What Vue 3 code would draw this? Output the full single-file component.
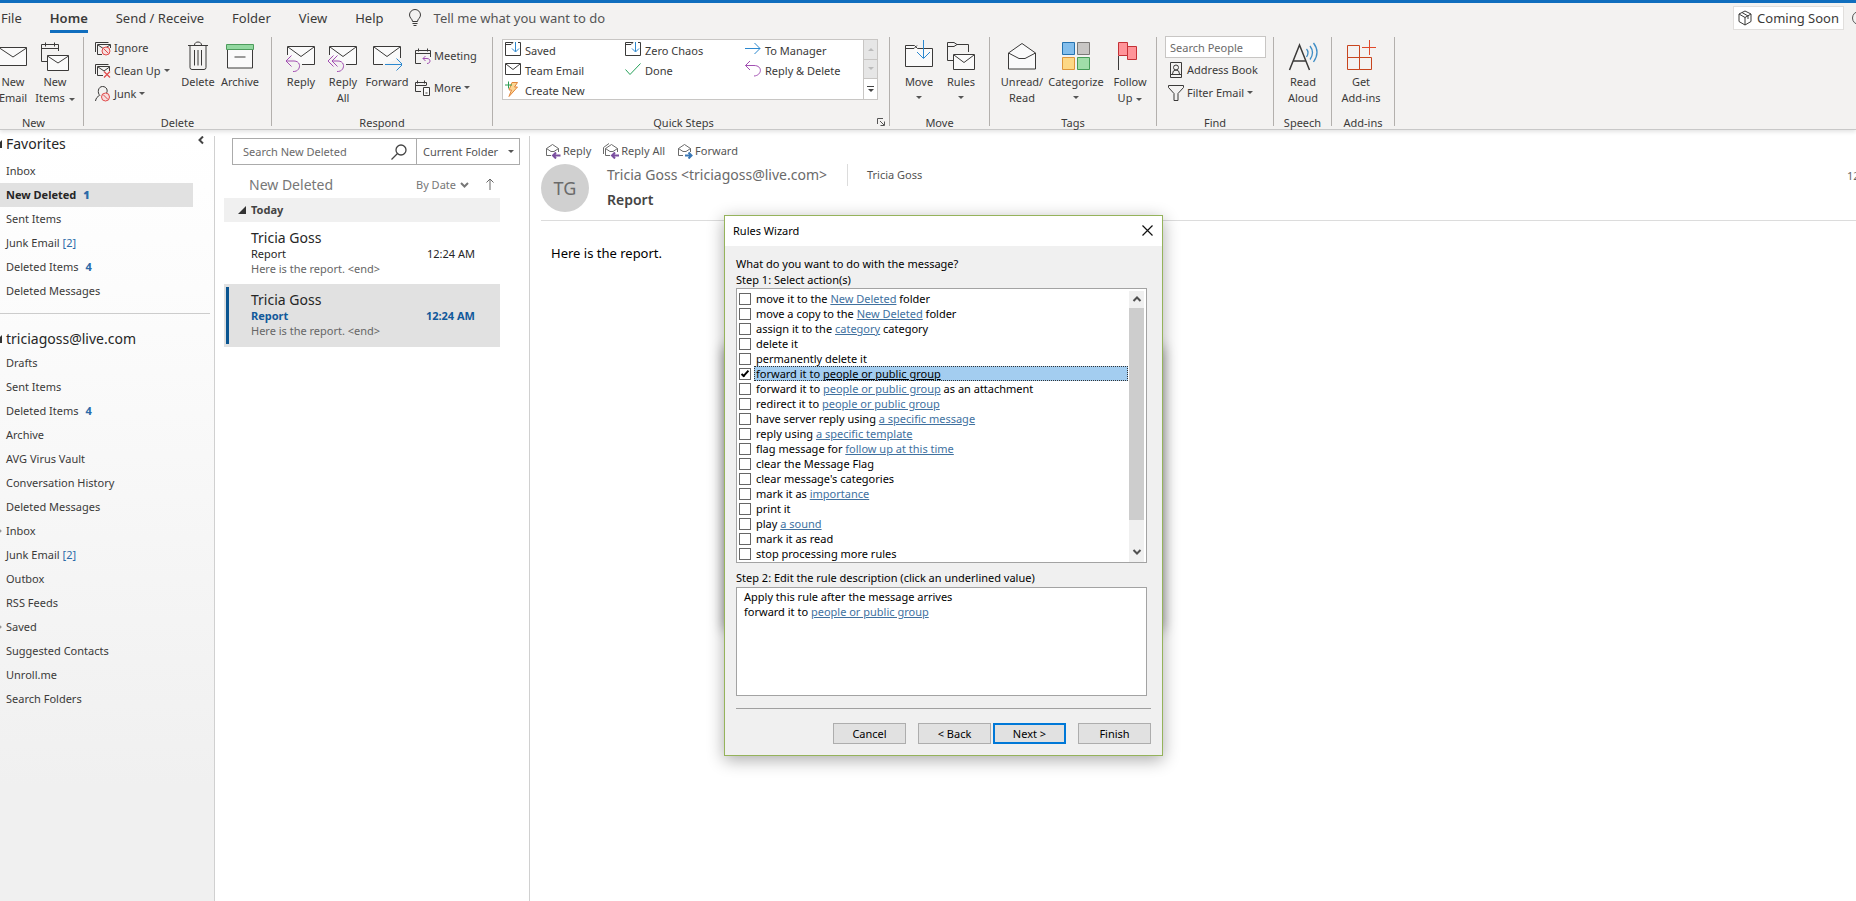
<script setup>
import { ref } from 'vue'

const tabs = ['File', 'Home', 'Send / Receive', 'Folder', 'View', 'Help']

const quickSteps = [
  { icon: 'q-folder', text: 'Saved' },
  { icon: 'q-mail', text: 'Team Email' },
  { icon: 'q-bolt', text: 'Create New' },
  { icon: 'q-folder', text: 'Zero Chaos' },
  { icon: 'q-check', text: 'Done' },
  { icon: 'q-to', text: 'To Manager' },
  { icon: 'q-reply', text: 'Reply & Delete' },
]

const favorites = [
  { name: 'Inbox' },
  { name: 'New Deleted', count: '1', active: true },
  { name: 'Sent Items' },
  { name: 'Junk Email', total: '[2]' },
  { name: 'Deleted Items', count: '4' },
  { name: 'Deleted Messages' },
]

const folders = [
  { name: 'Drafts' },
  { name: 'Sent Items' },
  { name: 'Deleted Items', count: '4' },
  { name: 'Archive' },
  { name: 'AVG Virus Vault' },
  { name: 'Conversation History' },
  { name: 'Deleted Messages' },
  { name: 'Inbox', nested: true },
  { name: 'Junk Email', total: '[2]' },
  { name: 'Outbox' },
  { name: 'RSS Feeds' },
  { name: 'Saved', nested: true },
  { name: 'Suggested Contacts' },
  { name: 'Unroll.me' },
  { name: 'Search Folders' },
]

const messages = [
  { from: 'Tricia Goss', subject: 'Report', time: '12:24 AM', preview: 'Here is the report. <end>' },
  { from: 'Tricia Goss', subject: 'Report', time: '12:24 AM', preview: 'Here is the report. <end>', selected: true },
]

const actions = ref([
  { pre: 'move it to the ', link: 'New Deleted', post: ' folder' },
  { pre: 'move a copy to the ', link: 'New Deleted', post: ' folder' },
  { pre: 'assign it to the ', link: 'category', post: ' category' },
  { pre: 'delete it' },
  { pre: 'permanently delete it' },
  { pre: 'forward it to ', link: 'people or public group', checked: true },
  { pre: 'forward it to ', link: 'people or public group', post: ' as an attachment' },
  { pre: 'redirect it to ', link: 'people or public group' },
  { pre: 'have server reply using ', link: 'a specific message' },
  { pre: 'reply using ', link: 'a specific template' },
  { pre: 'flag message for ', link: 'follow up at this time' },
  { pre: 'clear the Message Flag' },
  { pre: "clear message's categories" },
  { pre: 'mark it as ', link: 'importance' },
  { pre: 'print it' },
  { pre: 'play ', link: 'a sound' },
  { pre: 'mark it as read' },
  { pre: 'stop processing more rules' },
])
const current = ref(5)
</script>

<template>
  <div class="app">
    <svg class="sprite" aria-hidden="true">
      <symbol id="mail" viewBox="0 0 30 32" fill="none" stroke="#3b3a39"><path d="M1.5 7.5h27v18h-27z" fill="#fafafa" /><path d="M1.5 8 15 17 28.500 8" /></symbol>
      <symbol id="new-items" viewBox="0 0 30 32" fill="none" stroke="#3b3a39"><path d="M18.500 11V4.500h-17v17H7M1.500 8.500h17M5.500 2.500v4M14.500 2.500v4" /><path d="M7.500 15.500h21v15h-21z" fill="#fafafa" /><path d="M7.500 16 18 23l10.500-7" /></symbol>
      <symbol id="trash" viewBox="0 0 30 32" fill="none" stroke="#3b3a39"><path d="M5 5.500h20M11.500 5c0-4 7-4 7 0M7 5.500v22q0 2 2 2h12q2 0 2-2v-22M11.500 10v15.500M15 10v15.500M18.500 10v15.500" /></symbol>
      <symbol id="archive" viewBox="0 0 30 32" fill="none" stroke="#3b3a39"><path d="M2.500 9v19h25V9" fill="#fafafa" /><path d="M1.500 4.500h27v5h-27z" fill="#92d8a0" stroke="#4d9c5c" /><path d="M9.500 17h11" /></symbol>
      <symbol id="reply" viewBox="0 0 30 32" fill="none" stroke="#3b3a39"><path d="M1.500 15V6.500h27v18H16" fill="#fafafa" /><path d="M2 7l13 9.500L28 7" /><path d="M5.500 15.500 0 21l5.500 5.500M0 21h8c8 0 7 11-1 10.500" stroke="#a24fb2" /></symbol>
      <symbol id="reply-all" viewBox="0 0 30 32" fill="none" stroke="#3b3a39"><path d="M1.500 15V6.500h27v18H18" fill="#fafafa" /><path d="M2 7l13 9.500L28 7" /><path d="M5.500 15.500 0 21l5.500 5.500M9.500 15.500 4 21l5.500 5.500M4 21h6c8 0 7 11-1 10.500" stroke="#a24fb2" /></symbol>
      <symbol id="forward" viewBox="0 0 30 32" fill="none" stroke="#3b3a39"><path d="M11 24.500H1.500v-18h27V18" fill="#fafafa" /><path d="M2 7l13 9.500L28 7" /><path d="M13 24.500h17M24.500 18.500l6 6-6 6" stroke="#2b88cf" /></symbol>
      <symbol id="move" viewBox="0 0 30 32" fill="none" stroke="#3b3a39"><path d="M1.500 26.500v-21h9l3 3h15v18z" fill="#fafafa" /><path d="M1.500 8.500H10l3-3" /><path d="M19.500 0v18M13 12l6.500 6.500L26 12" stroke="#2b88cf" /></symbol>
      <symbol id="rules" viewBox="0 0 30 32" fill="none" stroke="#3b3a39"><path d="M22.500 12V4.500H11l-3-2H1.500v18H7M1.500 6.500H8l3-2" /><path d="M7.500 14.500h21v15h-21z" fill="#fafafa" /><path d="M8 15l10 7.500L28 15" /></symbol>
      <symbol id="unread" viewBox="0 0 30 32" fill="none" stroke="#3b3a39"><path d="M1.500 13 15 3.500 28.500 13v16h-27z" fill="#fafafa" /><path d="M1.500 13l10.500 5.500h6L28.500 13" /></symbol>
      <symbol id="categorize" viewBox="0 0 30 32"><path d="M1.500 2.500h12v12h-12z" fill="#83beec" stroke="#2573b0" /><path d="M16.500 2.500h12v12h-12z" fill="#c8c6c4" stroke="#7b7977" /><path d="M1.500 17.500h12v12h-12z" fill="#fdd885" stroke="#dd963b" /><path d="M16.500 17.500h12v12h-12z" fill="#a0dda9" stroke="#469b58" /></symbol>
      <symbol id="flag" viewBox="0 0 30 32" fill="none"><path d="M12.500 6.500h9v13h-9z" fill="#ff9499" stroke="#c43136" /><path d="M3.500 2.500h9v13h-9z" fill="#ff9499" stroke="#c43136" /><path d="M3.500 16v14" stroke="#3b3a39" /></symbol>
      <symbol id="read-aloud" viewBox="0 0 30 32" fill="none"><path d="M1.500 30 11.500 5 21.500 30M5.500 21h12.500" stroke="#3b3a39" stroke-width="1.500" /><path d="M18.500 9q3 3.500 0 8M22 6q5 6.500 0 13.500M25.500 3q7 9 0 19" stroke="#3e8dc5" stroke-width="1.300" /></symbol>
      <symbol id="addins" viewBox="0 0 30 32" fill="none" stroke="#c8451e"><path d="M1.500 5.500h12v12h-12zM1.500 17.500h12v12h-12zM13.500 17.500h12v12h-12z" /><path d="M23.500 0v15M16 7.500h15" stroke="#e0492b" /></symbol>
      <symbol id="ignore" viewBox="0 0 16 16" fill="none" stroke="#3b3a39"><path d="M.5 12V2.500h13" /><path d="M7 14.500H2.500v-10h13V8M3 5l6 4 6-4" /><circle cx="11" cy="11" r="4" fill="#f6dede" stroke="#e14b4b" /><path d="m8.500 8.500 5 5" stroke="#e14b4b" /></symbol>
      <symbol id="cleanup" viewBox="0 0 16 16" fill="none" stroke="#3b3a39"><path d="M.5 11V1.500h13M8 12.500H2.500v-9h12V8M3 4l6 4 5.500-4" /><path d="m9 8.500 6 6m0-6-6 6" stroke="#e14b4b" stroke-width="1.200" /></symbol>
      <symbol id="junk" viewBox="0 0 16 16" fill="none" stroke="#3b3a39"><path d="M.5 15C1 12 2.500 10.500 4.500 9.500M5 9.500C2 7 3 .5 7.500.5S13 5 11.500 7" /><circle cx="10.500" cy="11" r="4" fill="#f6dede" stroke="#e14b4b" /><path d="m8 8.500 5 5" stroke="#e14b4b" /></symbol>
      <symbol id="meeting" viewBox="0 0 16 16" fill="none" stroke="#3b3a39"><path d="M6 15.500H.5v-13h15V9M.5 5.500h15M3.500.500v3M12.500.5v3" /><path d="M10.500 8 8 10.500 10.500 13M8 10.500h4c4 0 4 5 0 5" stroke="#a24fb2" /></symbol>
      <symbol id="more" viewBox="0 0 16 16" fill="none" stroke="#3b3a39"><path d="M6 11.500H.5v-9h11V5M.5 5.500h11M2.500.5v3M9.500.5v3" /><path d="M8.500 7.500h6v8h-6zM10.500 13h2" fill="#fafafa" /></symbol>
      <symbol id="q-folder" viewBox="0 0 16 16" fill="none" stroke="#3b3a39"><path d="M8 1.500H.5v13h15v-13H13M.5 3.500H6l2-2" /><path d="M10.500 1v9.500M7 7.500l3.500 3.500L14 7.500" stroke="#2b88cf" /></symbol>
      <symbol id="q-mail" viewBox="0 0 16 16" fill="none" stroke="#3b3a39"><path d="M.5 2.500h15v11H.5zM1 3l7 5.500L15 3" /></symbol>
      <symbol id="q-bolt" viewBox="0 0 16 16" fill="none"><path d="M7 1.500h5.500L9.500 6h3L4 15.500 6.500 9H4z" fill="#fcd593" stroke="#e1853a" /><path d="M3.500.5v7M0 4h7" stroke="#2d9c52" /></symbol>
      <symbol id="q-check" viewBox="0 0 16 16" fill="none" stroke="#26a059"><path d="m.5 8.500 4.500 5L15.500 2.500" /></symbol>
      <symbol id="q-to" viewBox="0 0 16 16" fill="none" stroke="#2b88cf"><path d="M0 7.500h15M9.500 2l5.500 5.500L9.500 13" /></symbol>
      <symbol id="q-reply" viewBox="0 0 16 16" fill="none" stroke="#a24fb2"><path d="M5 0 .5 4.500 5 9M.5 4.500H9c9 0 8 10 0 10.500" /></symbol>
      <symbol id="book" viewBox="0 0 16 16" fill="none" stroke="#3b3a39"><path d="M2.500.5h11v15h-11zM2.500 12.500h11M4.500 12q0-4 3.500-4t3.500 4" /><circle cx="8" cy="5.500" r="2.500" /></symbol>
      <symbol id="filter" viewBox="0 0 16 16" fill="none" stroke="#3b3a39"><path d="M.5.500h15v2L10 8.500v7H6v-7l-5.500-6z" /></symbol>
      <symbol id="open-mail" viewBox="0 0 16 16" fill="none" stroke="#6b6b6b"><path d="M6 12.500H1.500V5.500L7.500 1.500l6 4V9M1.500 5.500l4.500 3h3l4.500-3" /></symbol>
      <symbol id="r-reply" viewBox="0 0 16 16" fill="none"><use href="#open-mail" width="16" height="16" /><path d="M8 12.500h7.500M11 9.500l-3 3 3 3" stroke="#7b4fa0" stroke-width="2" /></symbol>
      <symbol id="r-all" viewBox="0 0 16 16" fill="none"><path d="M.5 11V4.500L6 .5" stroke="#6b6b6b" /><use href="#open-mail" x="1" width="16" height="16" /><path d="M9 12.500h7M12 9.500l-3 3 3 3" stroke="#7b4fa0" stroke-width="2" /></symbol>
      <symbol id="r-forward" viewBox="0 0 16 16" fill="none"><use href="#open-mail" width="16" height="16" /><path d="M8 12.500h7M11.500 9.500l3 3-3 3" stroke="#3b78b5" stroke-width="2" /></symbol>
    </svg>

    <header class="top">
      <nav class="tabs">
        <button v-for="t in tabs" :key="t" class="tab" :class="{ active: t === 'Home' }"><span>{{ t }}</span></button>
        <button class="tell">
          <svg width="14" height="18" viewBox="0 0 14 18" fill="none" stroke="#3b3a39"><path d="M4.500 12.500C4.500 10 1.500 9 1.500 6a5.500 5.500 0 0 1 11 0c0 3-3 4-3 6.500zM4.500 14.500h5M5.500 16.500h3" /></svg>
          Tell me what you want to do
        </button>
        <button class="coming">
          <svg width="14" height="16" viewBox="0 0 14 16" fill="none" stroke="#3b3a39"><path d="m7 1 6 3v7.500L7 15l-6-3.500V4zM1 4l6 3.500L13 4M7 7.500V15M4 2.500l6 3.500v3" /></svg>
          Coming Soon
        </button>
        <span class="smile"></span>
      </nav>

      <div class="ribbon">
        <section class="group g-new">
          <div class="body">
            <button class="big"><svg><use href="#mail" /></svg><span>New</span><span>Email</span></button>
            <button class="big"><svg><use href="#new-items" /></svg><span>New</span><span>Items<i class="caret"></i></span></button>
          </div>
          <h2>New</h2>
        </section>
        <section class="group g-delete">
          <div class="body">
            <div class="smalls">
              <button class="small"><svg><use href="#ignore" /></svg>Ignore</button>
              <button class="small"><svg><use href="#cleanup" /></svg>Clean Up<i class="caret"></i></button>
              <button class="small"><svg><use href="#junk" /></svg>Junk<i class="caret"></i></button>
            </div>
            <button class="big"><svg><use href="#trash" /></svg><span>Delete</span></button>
            <button class="big"><svg><use href="#archive" /></svg><span>Archive</span></button>
          </div>
          <h2>Delete</h2>
        </section>
        <section class="group g-respond">
          <div class="body">
            <button class="big"><svg><use href="#reply" /></svg><span>Reply</span></button>
            <button class="big"><svg><use href="#reply-all" /></svg><span>Reply</span><span>All</span></button>
            <button class="big"><svg><use href="#forward" /></svg><span>Forward</span></button>
            <div class="smalls spread">
              <button class="small"><svg><use href="#meeting" /></svg>Meeting</button>
              <button class="small"><svg><use href="#more" /></svg>More<i class="caret"></i></button>
            </div>
          </div>
          <h2>Respond</h2>
        </section>
        <section class="group g-quick">
          <div class="body">
            <div class="gallery">
              <div class="steps">
                <button v-for="q in quickSteps" :key="q.text" class="step"><svg><use :href="'#' + q.icon" /></svg>{{ q.text }}</button>
              </div>
              <div class="pager">
                <button aria-label="Previous row" disabled><i class="caret up"></i></button>
                <button aria-label="Next row" disabled><i class="caret"></i></button>
                <button aria-label="More steps" class="on"><i class="dash"></i><i class="caret"></i></button>
              </div>
            </div>
          </div>
          <h2>Quick Steps</h2>
          <button class="launch" aria-label="Manage quick steps"><svg width="8" height="8" viewBox="0 0 8 8" fill="none" stroke="#555"><path d="M.5 6V.5H6M3 3l4 4M7.500 3.500v4h-4" /></svg></button>
        </section>
        <section class="group g-move">
          <div class="body">
            <button class="big"><svg><use href="#move" /></svg><span>Move</span><i class="caret below"></i></button>
            <button class="big"><svg><use href="#rules" /></svg><span>Rules</span><i class="caret below"></i></button>
          </div>
          <h2>Move</h2>
        </section>
        <section class="group g-tags">
          <div class="body">
            <button class="big"><svg><use href="#unread" /></svg><span>Unread/</span><span>Read</span></button>
            <button class="big wide"><svg><use href="#categorize" /></svg><span>Categorize</span><i class="caret below"></i></button>
            <button class="big"><svg><use href="#flag" /></svg><span>Follow</span><span>Up<i class="caret"></i></span></button>
          </div>
          <h2>Tags</h2>
        </section>
        <section class="group g-find">
          <div class="body">
            <div class="find">
              <input type="text" placeholder="Search People" aria-label="Search People" />
              <button class="small"><svg><use href="#book" /></svg>Address Book</button>
              <button class="small"><svg><use href="#filter" /></svg>Filter Email<i class="caret"></i></button>
            </div>
          </div>
          <h2>Find</h2>
        </section>
        <section class="group g-speech">
          <div class="body"><button class="big"><svg><use href="#read-aloud" /></svg><span>Read</span><span>Aloud</span></button></div>
          <h2>Speech</h2>
        </section>
        <section class="group g-addins">
          <div class="body"><button class="big"><svg><use href="#addins" /></svg><span>Get</span><span>Add-ins</span></button></div>
          <h2>Add-ins</h2>
        </section>
      </div>
    </header>

    <main class="main">
      <aside class="side">
        <div class="head">
          <h3><i class="tri"></i>Favorites</h3>
          <button class="collapse" aria-label="Collapse folder pane"><svg width="6" height="8" viewBox="0 0 6 8" fill="none" stroke="#444" stroke-width="2"><path d="M5 .5 1.500 4 5 7.500" /></svg></button>
        </div>
        <ul>
          <li v-for="f in favorites" :key="f.name" :class="{ active: f.active }">
            <a href="#">{{ f.name }}</a><b v-if="f.count">{{ f.count }}</b><em v-if="f.total">{{ f.total }}</em>
          </li>
        </ul>
        <hr />
        <h3 class="account"><i class="tri"></i>triciagoss@live.com</h3>
        <ul>
          <li v-for="f in folders" :key="f.name" :class="{ nested: f.nested }">
            <a href="#">{{ f.name }}</a><b v-if="f.count">{{ f.count }}</b><em v-if="f.total">{{ f.total }}</em>
          </li>
        </ul>
      </aside>

      <section class="list">
        <div class="search">
          <input type="text" placeholder="Search New Deleted" aria-label="Search New Deleted" />
          <svg width="16" height="16" viewBox="0 0 16 16" fill="none" stroke="#444" stroke-width="1.300"><circle cx="10" cy="6" r="5" /><path d="M6.500 9.500.5 15.500" /></svg>
          <button>Current Folder<i class="caret"></i></button>
        </div>
        <div class="sort">
          <h3>New Deleted</h3>
          <button class="by">By Date<svg width="9" height="6" viewBox="0 0 9 6" fill="none" stroke="#777" stroke-width="2"><path d="m1 1 3.500 3.500L8 1" /></svg></button>
          <button class="order" aria-label="Reverse order"><svg width="8" height="12" viewBox="0 0 8 12" fill="none" stroke="#666"><path d="M4 12V1M.5 4.500 4 1l3.500 3.500" /></svg></button>
        </div>
        <div class="today"><i class="tri"></i>Today</div>
        <article v-for="(m, i) in messages" :key="i" class="msg" :class="{ selected: m.selected }">
          <h4>{{ m.from }}</h4>
          <div class="line"><span>{{ m.subject }}</span><time>{{ m.time }}</time></div>
          <p>{{ m.preview }}</p>
        </article>
      </section>

      <section class="reading">
        <div class="tools">
          <button><svg><use href="#r-reply" /></svg>Reply</button>
          <button><svg><use href="#r-all" /></svg>Reply All</button>
          <button><svg><use href="#r-forward" /></svg>Forward</button>
        </div>
        <div class="mail-head">
          <div class="avatar">TG</div>
          <div class="who">
            <div class="from"><span>Tricia Goss &lt;triciagoss@live.com&gt;</span><span class="to">Tricia Goss</span></div>
            <h1>Report</h1>
          </div>
          <time>12:24 AM</time>
        </div>
        <p class="text">Here is the report.</p>
      </section>
    </main>

    <div class="under"></div>
    <form class="dialog" role="dialog" aria-labelledby="wizard-title" @submit.prevent>
      <div class="title">
        <h2 id="wizard-title">Rules Wizard</h2>
        <button type="button" aria-label="Close"><svg width="11" height="11" viewBox="0 0 11 11" stroke="#111" stroke-width="1.200"><path d="m.5.500 10 10m0-10-10 10" /></svg></button>
      </div>
      <div class="content">
        <p>What do you want to do with the message?</p>
        <p>Step 1: Select action(s)</p>
        <div class="box actions">
          <ul>
            <li v-for="(a, i) in actions" :key="i" :class="{ current: i === current }">
              <input :id="'action-' + i" v-model="a.checked" type="checkbox" />
              <label :for="'action-' + i">{{ a.pre }}<a v-if="a.link" href="#">{{ a.link }}</a>{{ a.post }}</label>
            </li>
          </ul>
          <div class="scroll">
            <svg width="8" height="6" viewBox="0 0 8 6" fill="none" stroke="#505050" stroke-width="2"><path d="M.5 5 4 1.500 7.500 5" /></svg>
            <div class="thumb"></div>
            <svg width="8" height="6" viewBox="0 0 8 6" fill="none" stroke="#505050" stroke-width="2"><path d="M.5 1 4 4.500 7.500 1" /></svg>
          </div>
        </div>
        <p class="step2">Step 2: Edit the rule description (click an underlined value)</p>
        <div class="box desc">
          <p>Apply this rule after the message arrives</p>
          <p>forward it to <a href="#">people or public group</a></p>
        </div>
        <div class="buttons">
          <button type="button">Cancel</button>
          <button type="button" class="back">&lt; Back</button>
          <button type="submit" class="next">Next &gt;</button>
          <button type="button">Finish</button>
        </div>
      </div>
    </form>
  </div>
</template>

<style>
body {
  background: #fff;
  overflow: hidden;
}
</style>

<style scoped>
.app {
  position: relative;
  display: flex;
  flex-direction: column;
  min-height: 100vh;
  overflow: hidden;
  font: 11px/16px "Noto Sans", "Open Sans", sans-serif;
  color: #3b3a39;
}
.app *, .app *::before { box-sizing: border-box; }
.sprite { position: absolute; width: 0; height: 0; }
h1, h2, h3, h4, p, ul { margin: 0; padding: 0; font-weight: 400; }
li { list-style: none; }
i, em { font-style: normal; }
button { padding: 0; border: 0; background: none; color: inherit; font: inherit; text-align: left; white-space: nowrap; }
input { font: inherit; color: inherit; border-radius: 0; outline: 0; }
input::placeholder { color: #6a6a6a; opacity: 1; }
a { color: inherit; text-decoration: none; }
svg { flex: none; overflow: visible; }

.caret { display: inline-block; border: 3px solid transparent; border-top: 3px solid #555; border-bottom: 0; margin-left: 4px; vertical-align: middle; }
.caret.up { border-top: 0; border-bottom: 3px solid #bbb; }

/* header */
.top { border-top: 3px solid #106ebe; border-bottom: 1px solid #c8c8c8; background: #f3f2f1; height: 130px; box-shadow: 0 2px 4px #e4e4e4; }
.tabs { display: flex; align-items: center; gap: 28px; height: 30px; padding-left: 1px; font-size: 13px; }
.tab span { display: block; padding: 4px 0; border-bottom: 3px solid transparent; margin-top: 3px; }
.tab.active { font-weight: 600; }
.tab.active span { border-color: #106ebe; }
.tell { display: flex; align-items: center; gap: 12px; margin-left: -4px; color: #555; }
.coming { display: flex; align-items: center; gap: 5px; margin-left: auto; height: 24px; padding: 0 4px; background: #fff; border: 1px solid #e1dfdd; }
.smile { width: 16px; height: 14px; margin: 0 -12px 0 -20px; border: 1px solid #555; border-radius: 8px; }

.ribbon { display: flex; padding-top: 4px; }
.group { position: relative; display: flex; flex-direction: column; height: 89px; border-right: 1px solid #b3b0ad; }
.group .body { display: flex; flex: none; height: 78px; }
.group h2 { font-size: 11px; line-height: 16px; text-align: center; }
.big { display: flex; flex-direction: column; align-items: center; width: 42px; line-height: 16px; padding-top: 3px; }
.big svg { width: 30px; height: 32px; margin-bottom: 2px; }
.caret.below { margin: 6px 0 0; }
.small { display: flex; align-items: center; gap: 3px; height: 23px; }
.small svg { width: 16px; height: 16px; }
.small .caret { margin-left: 0; }
.smalls { margin-top: -1px; }
.g-new { width: 100px; margin-left: -16px; }
.g-new .body { padding-left: 8px; }
.g-delete { width: 188px; }
.g-delete .body { padding-left: 11px; }
.g-delete .smalls { width: 82px; }
.g-respond { width: 221px; }
.g-respond .body { padding-left: 8px; }
.g-respond .big:nth-child(3) { width: 46px; }
.spread { display: flex; flex-direction: column; gap: 9px; padding: 8px 0 0 5px; }
.g-quick { width: 397px; }
.g-quick .body { padding: 2px 10px 0 9px; }
.g-quick h2 { padding-right: 15px; }
.gallery { display: flex; width: 376px; height: 61px; background: #fff; border: 1px solid #c8c6c4; }
.steps { flex: 1; display: grid; grid-template: repeat(3, 20px) / repeat(3, 120px); grid-auto-flow: column; }
.step:nth-child(6) { grid-area: 1 / 3; }
.step:nth-child(7) { grid-area: 2 / 3; }
.step { display: flex; align-items: center; gap: 4px; padding: 1px 0 0 2px; }
.step svg { width: 16px; height: 16px; margin-bottom: 4px; }
.pager { display: grid; grid-template-rows: repeat(3, 1fr); width: 15px; border-left: 1px solid #c8c6c4; }
.pager button { display: flex; flex-direction: column; gap: 2px; align-items: center; justify-content: center; background: #e6e6e6; border-bottom: 1px solid #c8c6c4; }
.pager .caret { margin: 0; border-top-color: #bbb; }
.pager .caret.up { border-top: 0; }
.pager .on { background: #fff; border: 0; }
.pager .on .caret { border-top-color: #444; }
.dash { width: 7px; height: 1px; background: #444; }
.launch { position: absolute; right: 4px; bottom: 0; line-height: 8px; }
.g-move { width: 100px; }
.g-move .body { padding-left: 8px; }
.g-tags { width: 167px; }
.g-tags .body { padding-left: 7px; }
.g-tags .big { width: 50px; }
.g-tags .big.wide { width: 58px; }
.g-find { width: 117px; }
.find { display: flex; flex-direction: column; width: 101px; margin: -1px 0 0 8px; }
.find input { width: 100%; height: 22px; padding: 0 4px; border: 1px solid #c8c6c4; background: #fff; }
.find .small { padding-left: 3px; }
.g-speech { width: 58px; }
.g-speech .body, .g-addins .body { padding-left: 8px; }
.g-addins { width: 63px; }

/* folder pane */
.main { flex: 1; display: grid; grid-template-columns: 215px 315px minmax(0, 1fr); }
.side { margin-top: 6px; border-right: 1px solid #d0d0d0; background: linear-gradient(#fff, #fcfcfc 20%, #f0f0f0 85%); overflow: hidden; }
.head { display: flex; justify-content: space-between; height: 23px; padding-right: 10px; }
.side h3 { position: relative; padding-left: 6px; font-size: 14px; line-height: 16px; color: #262626; }
.side .tri { position: absolute; left: -6px; top: 4px; }
.collapse { align-self: flex-start; line-height: 8px; }
.side li { position: relative; display: flex; height: 24px; line-height: 24px; padding-left: 6px; margin-right: 21px; }
.side li.active { background: #e1e1e1; font-weight: 700; color: #262626; }
.side b { margin-left: 7px; color: #2b6aa8; }
.side em { margin-left: 3px; color: #2b6aa8; }
.nested::before { content: ""; position: absolute; left: -3px; top: 10px; width: 4px; height: 4px; border: 1px solid #888; transform: rotate(45deg); }
hr { margin: 10px 4px 0 0; border: 0; border-top: 1px solid #ccc; }
.side .account { margin: 17px 0 4px; line-height: 16px; }
.tri { border: 4px solid transparent; border-right-color: #333; border-bottom-color: #333; width: 0; height: 0; }

/* message list */
.list { margin-top: 6px; padding: 2px 9px; border-right: 1px solid #d0d0d0; }
.search { display: flex; align-items: center; height: 27px; margin: 0 0 0 8px; border: 1px solid #ababab; }
.search input { flex: 1; min-width: 0; height: 100%; padding: 0 0 0 10px; border: 0; background: none; }
.search button { display: flex; align-items: center; justify-content: space-between; width: 103px; height: 100%; margin-left: 9px; padding: 0 5px 0 6px; border-left: 1px solid #ababab; color: #555; }
.sort { display: flex; align-items: center; height: 33px; padding: 7px 26px 0 25px; color: #777; }
.sort h3 { flex: 1; font-size: 14px; }
.by { display: flex; align-items: center; gap: 4px; margin-right: 17px; }
.order { line-height: 12px; }
.today { display: flex; align-items: center; height: 24px; margin-right: 20px; padding-left: 14px; gap: 5px; background: #f0f0f0; font-weight: 700; color: #444; }
.msg { position: relative; height: 62px; margin-right: 20px; padding: 7px 25px 0 27px; color: #262626; }
.msg h4 { font-size: 14px; line-height: 17px; }
.line { display: flex; justify-content: space-between; line-height: 15px; }
.msg p { color: #666; line-height: 15px; }
.msg.selected { background: #e1e1e1; height: 63px; }
.selected::before { content: ""; position: absolute; left: 2px; top: 3px; bottom: 3px; width: 3px; background: #0a5591; }
.selected .line { color: #11599b; font-weight: 700; }

/* reading pane */
.reading { padding: 13px 0 0 11px; }
.tools { display: flex; gap: 12px; padding-left: 4px; color: #555; line-height: 16px; }
.tools button { display: flex; align-items: center; gap: 2px; }
.tools svg { width: 16px; height: 16px; }
.mail-head { display: flex; align-items: flex-start; height: 62px; padding-top: 5px; border-bottom: 1px solid #dcdcdc; overflow: hidden; }
.avatar { display: grid; place-items: center; width: 48px; height: 48px; border-radius: 24px; background: #d0d0d0; color: #6a6a6a; font-size: 18px; }
.who { flex: 1; padding-left: 18px; }
.from { display: flex; align-items: center; height: 22px; font-size: 14px; color: #6a6a6a; }
.to { margin-left: 20px; padding-left: 19px; border-left: 1px solid #dcdcdc; font-size: 11px; line-height: 22px; color: #555; }
h1 { font-size: 14px; line-height: 20px; font-weight: 600; margin-top: 4px; color: #444; }
.mail-head time { margin-right: -39px; padding-top: 4px; color: #666; }
.text { padding: 23px 0 0 10px; font-size: 13px; line-height: 18px; color: #000; }

/* rules wizard */
.under { position: absolute; left: 724px; top: 345px; width: 439px; height: 283px; box-shadow: 0 2px 12px #0006; }
.dialog { position: absolute; left: 724px; top: 215px; width: 439px; border: 1px solid #95b35b; background: #f0f0f0; box-shadow: 0 4px 16px #0005; color: #000; }
.title { display: flex; align-items: center; justify-content: space-between; height: 30px; padding: 0 9px 0 8px; background: #fff; }
.title h2 { font-size: 11px; }
.title button { line-height: 11px; }
.content { padding: 10px 11px 11px; }
.box { width: calc(100% - 4px); background: #fff; border: 1px solid #a3a3a3; }
.actions { display: flex; height: 275px; padding: 2px 2px 0; }
.actions ul { flex: 1; }
.actions li { display: flex; align-items: center; height: 15px; line-height: 15px; }
.actions input { appearance: none; width: 12px; height: 12px; margin: 0 3px 0 0; border: 1px solid #666; background: #fff; display: grid; place-items: center; }
.actions input:checked::before { content: ""; width: 8px; height: 4px; border: solid #000; border-width: 0 0 2px 2px; transform: rotate(-48deg); margin-bottom: 2px; }
.actions label { flex: 1; padding-left: 1px; height: 15px; line-height: 14px; border: 1px dotted transparent; white-space: nowrap; }
.dialog a { color: #41719f; text-decoration: underline; }
.current label { background: #a3cdf0; border-color: #333; }
.actions .current a { color: #000; }
.scroll { display: flex; flex-direction: column; align-items: center; justify-content: space-between; width: 15px; margin-left: 1px; padding: 5px 0 7px; background: #f0f0f0; }
.thumb { width: 15px; flex: 1; margin: 6px 0 29px; background: #cdcdcd; }
.step2 { margin-top: 7px; }
.desc { height: 109px; padding: 1px 7px; margin-top: 1px; line-height: 15px; }
.buttons { display: flex; justify-content: flex-end; margin-top: 12px; padding-top: 14px; border-top: 1px solid #a0a0a0; }
.buttons button { width: 73px; height: 21px; text-align: center; background: #e1e1e1; border: 1px solid #adadad; margin-left: 12px; }
.buttons .next { margin-left: 2px; border: 2px solid #0078d7; }
</style>
